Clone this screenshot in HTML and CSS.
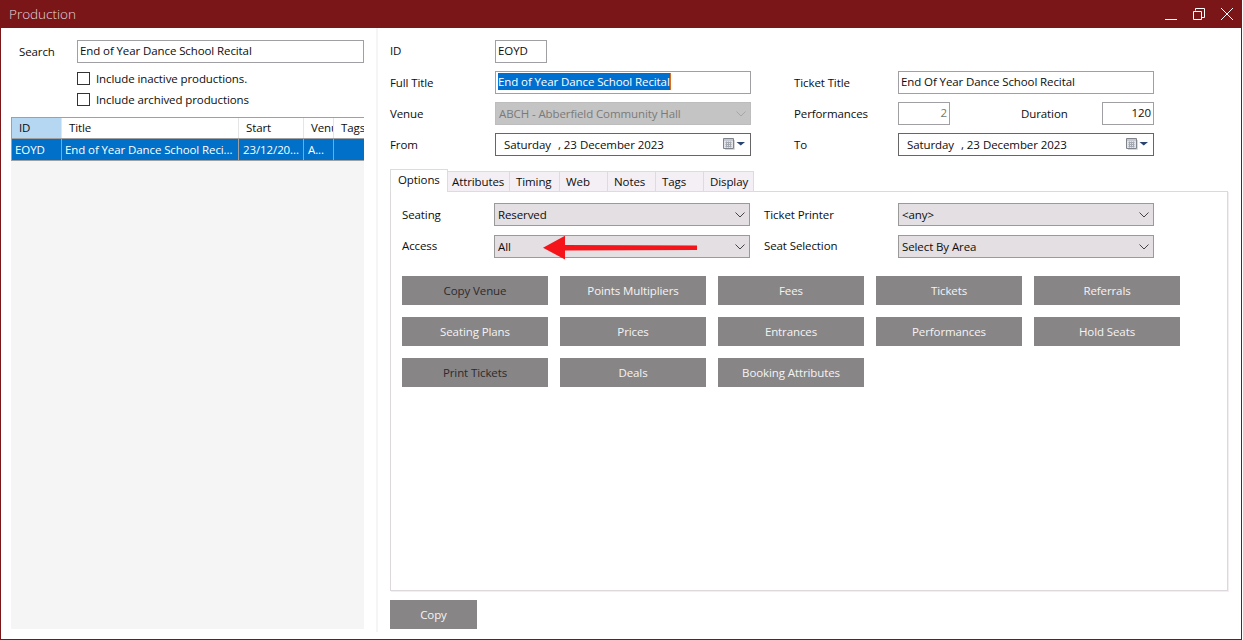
FILE: index.html
```html
<!DOCTYPE html>
<html lang="en">
<head>
<meta charset="utf-8">
<title>Production</title>
<link rel="stylesheet" href="styles.css">
</head>
<body>
<div class="window">
  <header class="titlebar">
    <span class="title">Production</span>
    <div class="controls">
      <svg class="ctl" width="14" height="14" viewBox="0 0 14 14"><path d="M1 12.500H13" stroke="#fff" fill="none"/></svg>
      <svg class="ctl" width="14" height="14" viewBox="0 0 14 14"><path d="M3.500 3.500V1.500H12.500V10.500H9.500M1.500 4.500H9.500V12.500H1.500Z" stroke="#fff" fill="none"/></svg>
      <svg class="ctl" width="14" height="14" viewBox="0 0 14 14"><path d="M1 1L13 13M13 1L1 13" stroke="#fff" fill="none"/></svg>
    </div>
  </header>
  <main class="main">
    <section class="left">
      <div class="search-row">
        <span class="search-label">Search</span>
        <div class="field search-field">End of Year Dance School Recital</div>
      </div>
      <div class="check-row"><span class="check"></span>Include inactive productions.</div>
      <div class="check-row"><span class="check"></span>Include archived productions</div>
      <div class="list">
        <div class="list-head">
          <div class="cell head-active">ID</div>
          <div class="cell">Title</div>
          <div class="cell">Start</div>
          <div class="cell">Venue</div>
          <div class="cell">Tags</div>
        </div>
        <div class="list-row">
          <div class="cell">EOYD</div>
          <div class="cell">End of Year Dance School Reci...</div>
          <div class="cell">23/12/20...</div>
          <div class="cell">A...</div>
          <div class="cell"></div>
        </div>
      </div>
    </section>
    <section class="right">
      <div class="form">
        <span class="lbl up">ID</span>
        <div class="field id-field">EOYD</div>
        <span></span><span></span>

        <span class="lbl">Full Title</span>
        <div class="field"><span class="selected">End of Year Dance School Recital</span></div>
        <span class="lbl">Ticket Title</span>
        <div class="field">End Of Year Dance School Recital</div>

        <span class="lbl">Venue</span>
        <div class="combo disabled">ABCH - Abberfield Community Hall
          <svg class="chev" width="10" height="6" viewBox="0 0 10 6"><path d="M.5 .5L5 5L9.500 .5" stroke="#a6a6a6" fill="none"/></svg>
        </div>
        <span class="lbl">Performances</span>
        <div class="split">
          <div class="field num ro">2</div>
          <span class="lbl">Duration</span>
          <div class="field num">120</div>
        </div>

        <span class="lbl">From</span>
        <div class="date">
          <span class="date-text">Saturday</span><span class="d1">, 23</span><span class="d2">December</span><span class="d2">2023</span>
          <svg class="cal" width="22" height="14" viewBox="0 0 22 14"><path d="M2 11.500H11.500V2" stroke="#d8d8d8" fill="none"/><path d="M.5 .5H10.500V10.500H.5Z" fill="#e4e4ea" stroke="#7f838c"/><path d="M1 2H10" stroke="#a9acb3" fill="none"/><path d="M2.500 4.500H8.500M2.500 6.500H8.500M2.500 8.500H8.500M3.500 3.500V9.500M5.500 3.500V9.500M7.500 3.500V9.500" stroke="#a3a7b0" fill="none"/><path d="M13.500 4H22L17.750 7.500Z" fill="#2a4470"/></svg>
        </div>
        <span class="lbl">To</span>
        <div class="date">
          <span class="date-text">Saturday</span><span class="d1">, 23</span><span class="d2">December</span><span class="d2">2023</span>
          <svg class="cal" width="22" height="14" viewBox="0 0 22 14"><path d="M2 11.500H11.500V2" stroke="#d8d8d8" fill="none"/><path d="M.5 .5H10.500V10.500H.5Z" fill="#e4e4ea" stroke="#7f838c"/><path d="M1 2H10" stroke="#a9acb3" fill="none"/><path d="M2.500 4.500H8.500M2.500 6.500H8.500M2.500 8.500H8.500M3.500 3.500V9.500M5.500 3.500V9.500M7.500 3.500V9.500" stroke="#a3a7b0" fill="none"/><path d="M13.500 4H22L17.750 7.500Z" fill="#2a4470"/></svg>
        </div>
      </div>

      <nav class="tabs">
        <div class="tab active t-options">Options</div>
        <div class="tab t-attr">Attributes</div>
        <div class="tab t-timing">Timing</div>
        <div class="tab t-std">Web</div>
        <div class="tab t-std">Notes</div>
        <div class="tab t-std">Tags</div>
        <div class="tab t-disp">Display</div>
      </nav>
      <div class="panel">
        <div class="opts">
          <span class="lbl">Seating</span>
          <div class="combo">Reserved
            <svg class="chev" width="10" height="6" viewBox="0 0 10 6"><path d="M.5 .5L5 5L9.500 .5" stroke="#444" fill="none"/></svg>
          </div>
          <span class="lbl">Ticket Printer</span>
          <div class="combo">&lt;any&gt;
            <svg class="chev" width="10" height="6" viewBox="0 0 10 6"><path d="M.5 .5L5 5L9.500 .5" stroke="#444" fill="none"/></svg>
          </div>
          <span class="lbl up">Access</span>
          <div class="combo">All
            <svg class="chev" width="10" height="6" viewBox="0 0 10 6"><path d="M.5 .5L5 5L9.500 .5" stroke="#444" fill="none"/></svg>
            <svg class="arrow" width="156" height="26" viewBox="0 0 156 26"><path d="M0 12.700L22 .7V10L154 10.500V15L22 15.500V24.500Z" fill="#f5141a"/></svg>
          </div>
          <span class="lbl up">Seat Selection</span>
          <div class="combo">Select By Area
            <svg class="chev" width="10" height="6" viewBox="0 0 10 6"><path d="M.5 .5L5 5L9.500 .5" stroke="#444" fill="none"/></svg>
          </div>
        </div>
        <div class="btns">
          <div class="btn dark">Copy Venue</div>
          <div class="btn">Points Multipliers</div>
          <div class="btn">Fees</div>
          <div class="btn">Tickets</div>
          <div class="btn">Referrals</div>
          <div class="btn">Seating Plans</div>
          <div class="btn">Prices</div>
          <div class="btn">Entrances</div>
          <div class="btn">Performances</div>
          <div class="btn">Hold Seats</div>
          <div class="btn dark">Print Tickets</div>
          <div class="btn">Deals</div>
          <div class="btn">Booking Attributes</div>
        </div>
      </div>
      <div class="btn copy">Copy</div>
    </section>
  </main>
</div>
</body>
</html>
```

FILE: styles.css
```css
* { box-sizing: border-box; }
html, body { margin: 0; padding: 0; background: #fff; }
body {
  font-family: "Open Sans", "Noto Sans", sans-serif;
  font-size: 11.5px;
  letter-spacing: -0.1px;
  color: #0d0d0d;
  overflow: hidden;
}
.window {
  width: 1242px;
  height: 640px;
  border: solid #7a1518;
  border-width: 0 1px 1px 1px;
  display: flex;
  flex-direction: column;
  background: #fff;
}
.titlebar {
  height: 28px;
  margin: 0 -1px;
  background: #7a1518;
  color: #e6d6d6;
  display: flex;
  align-items: center;
  justify-content: space-between;
  padding: 0 8px 0 9px;
  flex: none;
}
.title { font-size: 13.500px; font-weight: 300; letter-spacing: 0; }
.controls { display: flex; gap: 14px; align-items: center; }
.ctl { display: block; }
.main { flex: 1; display: flex; min-height: 0; }

.left {
  width: 375px;
  padding: 12px 12px 10px 10px;
  display: flex;
  flex-direction: column;
  flex: none;
}
.search-row { display: flex; align-items: center; height: 23px; }
.search-label { width: 66px; padding-left: 8px; flex: none; }
.field {
  height: 23px;
  border: 1px solid #a0a0a4;
  background: #fff;
  padding: 0 2px;
  line-height: 20px;
  white-space: nowrap;
  overflow: hidden;
}
.search-field { flex: 1; }
.check-row {
  display: flex;
  align-items: center;
  height: 21px;
  margin-left: 66px;
  gap: 6px;
}
.search-row + .check-row { margin-top: 5px; }
.check {
  width: 13px;
  height: 13px;
  border: 1px solid #333;
  background: #fff;
  flex: none;
}
.list {
  flex: 1;
  margin-top: 7px;
  background: #f5f5f5;
  min-height: 0;
}
.list-head, .list-row {
  display: grid;
  grid-template-columns: 50px 177px 65px 30px 30px;
  white-space: nowrap;
}
.list-head {
  height: 22px;
  background: #fff;
  border-top: 1px solid #a0a0a0;
  border-left: 1px solid #a0a0a0;
  border-bottom: 1px solid #a0a0a0;
  line-height: 20px;
}
.list-head .cell {
  padding-left: 7px;
  overflow: hidden;
  border-right: 1px solid #e5e5e5;
}
.list-head .cell:last-child { border-right: 0; }
.head-active { background: #b5d7f2; }
.list-row {
  height: 22px;
  background: #0070c8;
  color: #fff;
  line-height: 22px;
  border-left: 1px solid #a0a0a0;
  border-bottom: 1px solid #a0a0a0;
}
.list-row .cell {
  padding-left: 3px;
  overflow: hidden;
  border-right: 1px solid #a0a0a0;
}
.list-row .cell:nth-child(3),
.list-row .cell:nth-child(4) { padding-left: 4px; }
.list-row .cell:last-child { border-right: 0; }

.right {
  flex: 1;
  border-left: 2px solid #f5f5f5;
  padding: 12px 13px 0 12px;
  display: flex;
  flex-direction: column;
  height: 604px;
}
.form {
  display: grid;
  grid-template-columns: 105px 256px 147px 256px;
  row-gap: 8px;
  align-items: center;
  grid-auto-rows: 23px;
}
.form > :nth-child(4n+3) { padding-left: 43px; }
.id-field { width: 52px; }
.selected { background: #0070d0; color: #fff; border-right: 1px solid #e06a20; display: inline-block; line-height: 17px; }
.combo {
  height: 23px;
  border: 1px solid #9a9a9a;
  background: #e3dfe2;
  padding-left: 3px;
  line-height: 20px;
  display: flex;
  align-items: center;
  justify-content: space-between;
  padding-right: 4px;
  position: relative;
  white-space: nowrap;
}
.combo.disabled { background: #c4c4c4; color: #7a7a7a; border-color: #bdbdbd; }
.chev { flex: none; }
.split { display: flex; align-items: center; }
.split .lbl { margin-left: 71px; }
.split .num:last-child { margin-left: auto; }
.num { width: 52px; text-align: right; }
.ro { color: #777; }
.date {
  height: 23px;
  border: 1px solid #666;
  background: #fff;
  padding: 0 5px 0 8px;
  display: flex;
  align-items: center;
  white-space: nowrap;
}
.date-text { width: 54px; }
.d1 { width: 22px; }
.d2 + .d2 { margin-left: 3px; }
.cal { margin-left: auto; }
.tabs {
  display: flex;
  align-items: flex-end;
  margin-top: 13px;
  height: 23px;
  flex: none;
  position: relative;
  z-index: 1;
}
.tab {
  height: 21px;
  background: #f3eff4;
  border: 1px solid #dcdcdc;
  border-left: 0;
  padding-left: 4px;
  line-height: 19px;
}
.tab.active {
  height: 23px;
  background: #fff;
  border-left: 1px solid #dcdcdc;
  border-bottom: 0;
  padding-left: 7px;
  line-height: 20px;
}
.t-options { width: 58px; }
.t-attr { width: 62px; }
.t-timing { width: 50px; padding-left: 6px; }
.t-std { width: 48px; padding-left: 6px; }
.t-disp { width: 50px; padding-left: 6px; }
.panel {
  height: 400px;
  border: 1px solid #dcd8dc;
  margin-top: -1px;
  padding: 11px;
  background: #fff;
  flex: none;
  box-shadow: 1px 1px 0 #f2eef2;
}
.opts {
  display: grid;
  grid-template-columns: 92px 256px 148px 256px;
  grid-auto-rows: 23px;
  row-gap: 9px;
  align-items: center;
}
.opts > :nth-child(4n+3) { padding-left: 14px; }
.lbl.up { margin-bottom: 2px; }
.arrow { position: absolute; left: 48px; top: -1px; }
.btns {
  display: grid;
  grid-template-columns: repeat(5, 146px);
  grid-auto-rows: 29px;
  gap: 12px;
  margin-top: 18px;
}
.btn {
  background: #888587;
  color: #f4f4f4;
  display: flex;
  align-items: center;
  justify-content: center;
}
.btn.dark { color: #2b2b2b; }
.copy { width: 87px; height: 29px; margin-top: 9px; flex: none; }
```
